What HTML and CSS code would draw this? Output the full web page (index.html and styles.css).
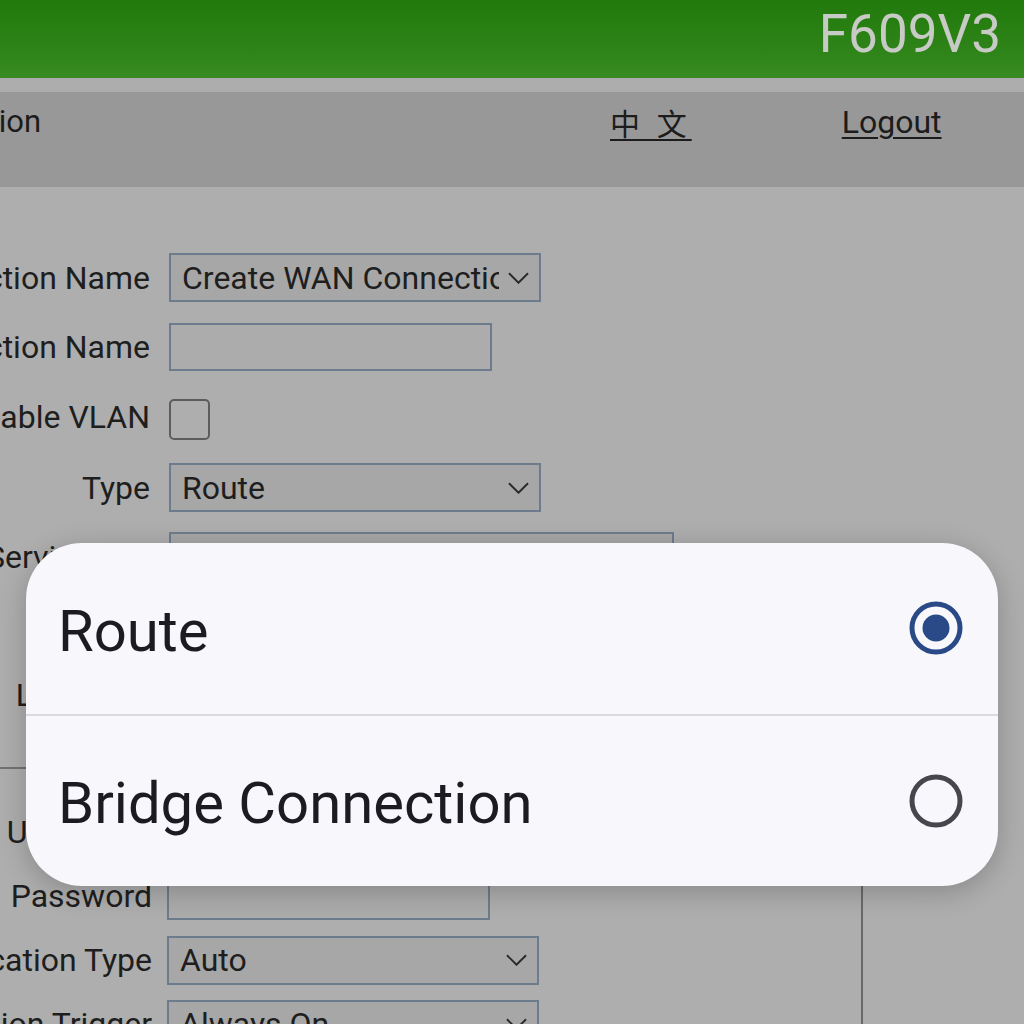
FILE: index.html
```html
<!DOCTYPE html>
<html lang="en">
<head>
<meta charset="utf-8">
<title>F609V3</title>
<link rel="stylesheet" href="styles.css">
</head>
<body>
<header class="topbar"><span class="model">F609V3</span></header>
<div class="strip"></div>
<nav class="nav">
  <div class="nav-first"><span>Administration</span></div>
  <a class="nav-link lang">中 文</a>
  <a class="nav-link logout">Logout</a>
</nav>
<main class="content">
  <section class="form form-main">
    <div class="row"><div class="label"><span>Connection Name</span></div>
      <div class="field select w372"><span class="val">Create WAN Connection</span><svg class="chev" viewBox="0 0 22 12"><path d="M1 1 L11 11 L21 1"/></svg></div></div>
    <div class="row"><div class="label"><span>New Connection Name</span></div>
      <div class="field input w323"></div></div>
    <div class="row row-vlan"><div class="label"><span>Enable VLAN</span></div>
      <div class="checkbox"></div></div>
    <div class="row"><div class="label"><span>Type</span></div>
      <div class="field select w372"><span class="val">Route</span><svg class="chev" viewBox="0 0 22 12"><path d="M1 1 L11 11 L21 1"/></svg></div></div>
    <div class="row"><div class="label"><span>Service List</span></div>
      <div class="field select w505"><span class="val">INTERNET</span></div></div>
    <div class="row"><div class="label"><span>MTU</span></div>
      <div class="field input w323"></div></div>
    <div class="row"><div class="label"><span>Link Type</span></div>
      <div class="field select w372"><span class="val">PPP</span></div></div>
  </section>
  <section class="form form-ppp">
    <div class="row"><div class="label"><span>Username</span></div>
      <div class="field input w323"></div></div>
    <div class="row"><div class="label"><span>Password</span></div>
      <div class="field input w323"></div></div>
    <div class="row"><div class="label"><span>Authentication Type</span></div>
      <div class="field select w372"><span class="val">Auto</span><svg class="chev" viewBox="0 0 22 12"><path d="M1 1 L11 11 L21 1"/></svg></div></div>
    <div class="row"><div class="label"><span>Connection Trigger</span></div>
      <div class="field select w372"><span class="val">Always On</span><svg class="chev" viewBox="0 0 22 12"><path d="M1 1 L11 11 L21 1"/></svg></div></div>
  </section>
</main>
<div class="sheet">
  <div class="option">
    <span class="opt-text">Route</span>
    <svg class="radio" viewBox="0 0 54 54"><circle class="ring on" cx="27" cy="27" r="24"/><circle class="dot" cx="27" cy="27" r="13.5"/></svg>
  </div>
  <div class="divider"></div>
  <div class="option">
    <span class="opt-text">Bridge Connection</span>
    <svg class="radio" viewBox="0 0 54 54"><circle class="ring off" cx="27" cy="27" r="24"/></svg>
  </div>
</div>
</body>
</html>
```
FILE: styles.css
```css
html, body {
  margin: 0;
  padding: 0;
}
body {
  width: 1024px;
  height: 1024px;
  overflow: hidden;
  background: #aeaeae;
  font-family: Roboto, "Noto Sans", "Noto Sans CJK SC", sans-serif;
  color: #1e1e1e;
  position: relative;
}
.topbar {
  height: 78px;
  background: linear-gradient(180deg, #217a0b 0%, #2c8216 55%, #378b20 100%);
  display: flex;
  justify-content: flex-end;
  align-items: flex-start;
  padding: 3px 23px 0 0;
  box-sizing: border-box;
}
.model {
  font-size: 53px;
  line-height: 62px;
  color: #c8cac6;
}
.strip {
  height: 14px;
  background: #adadad;
}
.nav {
  height: 95px;
  background: #989898;
  display: flex;
  align-items: flex-start;
  padding-top: 12px;
  box-sizing: border-box;
  font-size: 31px;
  line-height: 36px;
  color: #1c1c1c;
}
.nav-first {
  width: 41px;
  display: flex;
  justify-content: flex-end;
  white-space: nowrap;
}
.nav-link {
  text-decoration: underline;
  text-underline-offset: 4px;
  text-decoration-thickness: 2px;
  white-space: nowrap;
}
.lang {
  margin-left: 569px;
  font-family: "Noto Sans CJK SC", sans-serif;
  font-size: 30px;
  letter-spacing: 5px;
  margin-right: -3px;
}
.logout {
  margin-left: 153px;
  font-size: 32px;
}
.content {
  display: flex;
  flex-direction: column;
}
.form-main {
  padding-top: 56px;
}
.form-ppp {
  margin-top: 38px;
  width: 861px;
  border-top: 2px solid #727272;
  border-right: 2px solid #6a6a6a;
  padding-top: 31px;
}
.row {
  display: flex;
  align-items: center;
  height: 69px;
  gap: 19px;
}
.row-vlan {
  height: 72px;
}
.row-vlan .checkbox {
  margin-top: 4px;
}
.form-ppp .row {
  height: 64px;
  gap: 15px;
}
.label {
  width: 150px;
  flex: none;
  display: flex;
  justify-content: flex-end;
  white-space: nowrap;
  font-size: 32px;
  line-height: 36px;
}
.form-ppp .label {
  width: 152px;
}
.field {
  box-sizing: border-box;
  height: 49px;
  border: 2px solid #6d7c8c;
  display: flex;
  align-items: center;
  font-size: 32px;
  color: #1e1e1e;
  flex: none;
}
.input {
  height: 48px;
  background: #acacac;
}
.select {
  background: #a7a7a7;
  padding: 0 10px 0 11px;
}
.w372 { width: 372px; }
.w323 { width: 323px; }
.w505 { width: 505px; }
.val {
  flex: 1;
  overflow: hidden;
  white-space: nowrap;
  min-width: 0;
}
.chev {
  width: 21px;
  height: 12px;
  margin-left: 9px;
  flex: none;
  fill: none;
  stroke: #2a2a2a;
  stroke-width: 2;
}
.checkbox {
  width: 41px;
  height: 41px;
  box-sizing: border-box;
  border: 2px solid #5c5c5c;
  border-radius: 5px;
}
.sheet {
  position: absolute;
  left: 26px;
  top: 543px;
  width: 972px;
  height: 343px;
  background: #f7f7fc;
  border-radius: 56px;
  box-shadow: 0 6px 28px rgba(0, 0, 0, 0.22);
  display: flex;
  flex-direction: column;
  overflow: hidden;
}
.option {
  flex: 1;
  display: flex;
  align-items: center;
  justify-content: space-between;
  padding: 0 35px 0 32px;
}
.opt-text {
  font-size: 58px;
  color: #1b1b21;
  line-height: 68px;
  padding-top: 5px;
}
.divider {
  height: 2px;
  background: #dadadf;
}
.radio {
  width: 54px;
  height: 54px;
}
.ring {
  fill: none;
  stroke-width: 5;
}
.ring.on { stroke: #2a4987; }
.ring.off { stroke: #46464c; }
.dot { fill: #2a4987; }
```
